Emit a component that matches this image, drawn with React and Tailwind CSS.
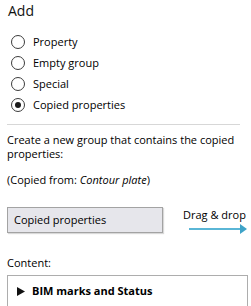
import React from "react";

function Radio({ label, checked }) {
  return (
    <div className="flex h-[21px] items-center">
      <span className="ml-[4px] flex h-[14px] w-[14px] items-center justify-center rounded-full border border-[#3c3c3c] bg-white">
        {checked && <span className="h-[6px] w-[6px] rounded-full bg-[#1a1a1a]" />}
      </span>
      <span className="ml-[8px] leading-[14px]">{label}</span>
    </div>
  );
}

export default function App() {
  return (
    <div className="h-[306px] w-[251px] overflow-hidden bg-white pl-[7px] font-['Open_Sans',sans-serif] text-[11px] text-black">
      <div className="h-[22px] pl-[1px] text-[14px] leading-[22px] text-[#111]">Add</div>
      <div className="mt-[9px] flex flex-col">
        <Radio label="Property" />
        <Radio label="Empty group" />
        <Radio label="Special" />
        <Radio label="Copied properties" checked />
      </div>
      <div className="mt-[9px] h-px w-[233px] bg-[#d7d7d7]" />
      <div className="mt-[8px] w-[240px] leading-[14px]">
        Create a new group that contains the copied properties:
      </div>
      <div className="mt-[12px] leading-[14px]">
        (Copied from: <span className="italic">Contour plate</span>)
      </div>
      <div className="mt-[20px] flex">
        <div className="flex h-[26px] w-[156px] items-center border border-[#a3a3a3] bg-[#e6e6eb] pl-[6px] shadow-[1px_1px_1px_rgba(0,0,0,0.15)]">
          Copied properties
        </div>
        <div className="ml-[20px] flex flex-col whitespace-nowrap">
          <div className="mt-[1px] leading-[14px]">Drag &amp; drop</div>
          <svg width="60" height="10" viewBox="0 0 60 10" className="ml-[6px] mt-[2px]">
            <line x1="0" y1="5" x2="52" y2="5" stroke="#5ab6d6" strokeWidth="2" />
            <polygon points="51,0 58,5 51,10" fill="#3fa3c8" />
          </svg>
        </div>
      </div>
      <div className="mt-[22px] leading-[14px]">Content:</div>
      <div className="mt-[5px] h-[60px] w-[241px] border border-[#adadad] pt-[8px]">
        <div className="flex h-[14px] items-center">
          <svg width="8" height="9" viewBox="0 0 8 9" className="ml-[9px]">
            <polygon points="0,0 8,4.5 0,9" fill="#111" />
          </svg>
          <span className="ml-[7px] font-bold leading-[14px]">BIM marks and Status</span>
        </div>
      </div>
    </div>
  );
}
